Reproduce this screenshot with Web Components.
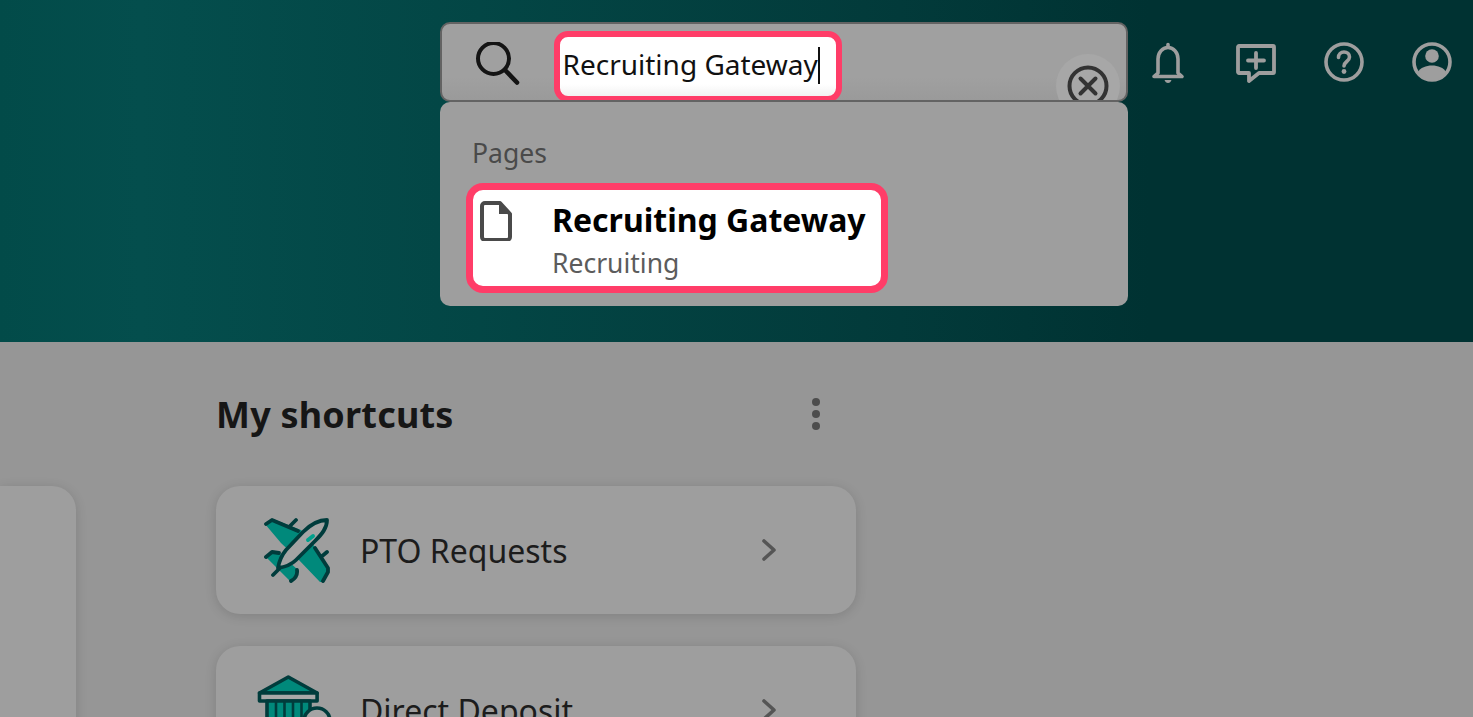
<!DOCTYPE html>
<html><head><meta charset="utf-8"><style>
html,body{margin:0;height:717px;overflow:hidden;background:#969696;font-family:"Noto Sans",sans-serif}
</style></head><body>
<app-page>
  <app-header slot="header">
    <search-box slot="search" value="Recruiting Gateway">
      <search-result title="Recruiting Gateway" sub="Recruiting"></search-result>
    </search-box>
    <icon-button slot="actions" name="bell" label="Notifications"></icon-button>
    <icon-button slot="actions" name="feedback" label="Feedback"></icon-button>
    <icon-button slot="actions" name="help" label="Help"></icon-button>
    <icon-button slot="actions" name="user" label="Profile"></icon-button>
  </app-header>
  <side-card slot="side"></side-card>
  <shortcut-list slot="main" heading="My shortcuts">
    <shortcut-card label="PTO Requests" icon="plane"></shortcut-card>
    <shortcut-card label="Direct Deposit" icon="bank"></shortcut-card>
  </shortcut-list>
</app-page>
<script>
function def(name, html){
  customElements.define(name, class extends HTMLElement{
    connectedCallback(){
      if(this.shadowRoot) return;
      const r=this.attachShadow({mode:'open'});
      r.innerHTML=typeof html==='function'?html(this):html;
    }
  });
}
def('app-page',`<style>
:host{display:block;height:717px;overflow:hidden}
.grid{display:grid;grid-template-columns:76px 640px;column-gap:140px;align-items:start}
</style>
<slot name="header"></slot>
<div class="grid"><slot name="side"></slot><slot name="main"></slot></div>`);
def('app-header',`<style>
:host{display:grid;grid-template-columns:688px auto;column-gap:16px;align-items:start;height:342px;box-sizing:border-box;padding:22px 0 0 440px;
background:linear-gradient(90deg,#024b49 0,#044e4d 140px,#034645 480px,#023a3a 900px,#003232 1150px,#003232 100%)}
.acts{display:flex;gap:40px;padding-top:16px}
</style><slot name="search"></slot><div class="acts"><slot name="actions"></slot></div>`);
const c='#9e9e9e';
const icons={
bell:`<path d="M24 6.500v3M14 35V21c0-6.500 4.400-11.500 10-11.500S34 14.500 34 21v14l4 3.500H10z" fill="none" stroke="${c}" stroke-width="3.600" stroke-linejoin="round" stroke-linecap="round"/><path d="M20.500 42h7q-1 3-3.500 3t-3.500-3z" fill="${c}"/>`,
feedback:`<path d="M7 8h34a1 1 0 0 1 1 1v25a1 1 0 0 1-1 1H27l-10 8v-8H7a1 1 0 0 1-1-1V9a1 1 0 0 1 1-1z" fill="none" stroke="${c}" stroke-width="3.800" stroke-linejoin="round"/><path d="M24 15v15M16 22.500h16" fill="none" stroke="${c}" stroke-width="3.800" stroke-linecap="round"/>`,
help:`<circle cx="24" cy="24" r="18" fill="none" stroke="${c}" stroke-width="3.600"/><path d="M18.500 19.500c0-3.400 2.400-5.500 5.500-5.500s5.500 2.100 5.500 5c0 4.500-5.500 4.500-5.500 9" fill="none" stroke="${c}" stroke-width="3.600" stroke-linecap="round"/><circle cx="24" cy="33.500" r="2.400" fill="${c}"/>`,
user:`<circle cx="24" cy="24" r="18" fill="none" stroke="${c}" stroke-width="3.600"/><circle cx="24" cy="18" r="6.800" fill="${c}"/><path d="M9.500 34.500c3-5 8.500-7 14.500-7s11.500 2 14.500 7c-3.500 5-8.500 8-14.500 8s-11-3-14.500-8z" fill="${c}"/>`
};
def('icon-button',h=>`<style>:host{display:block;width:48px;height:48px}svg{display:block}</style>
<svg width="48" height="48" viewBox="0 0 48 48" role="img" aria-label="${h.getAttribute('label')}">${icons[h.getAttribute('name')]}</svg>`);
def('search-box',h=>`<style>
:host{display:block;position:relative;width:688px;height:80px}
.box{box-sizing:border-box;height:80px;background:linear-gradient(#a0a0a0 0,#a0a0a0 70%,#9a9a9a 100%);border:2px solid #636363;border-radius:10px;display:flex;align-items:flex-start;overflow:hidden;position:relative}
.mag{margin:18px 0 0 33px;width:46px;height:46px;flex:none;display:block}
.field{box-sizing:border-box;margin:7px 0 0 33px;width:288px;height:71px;flex:none;border:6.500px solid #ff3d68;border-radius:14px;background:linear-gradient(#fff 80%,#f2f2f2);
 padding:0 0 0 2.500px;font-size:28px;color:#111;display:flex;align-items:center;white-space:nowrap;position:relative;z-index:1}
.txt{position:relative;top:-3px}
.caret{display:inline-block;width:2px;height:37px;background:#111;flex:none;position:relative;top:-1px}
.hover{position:absolute;left:614px;top:30px;width:64px;height:64px;border-radius:50%;background:#a7a7a7;display:flex;align-items:center;justify-content:center}
.drop{position:absolute;left:0;top:80px;width:688px;height:204px;box-sizing:border-box;background:#9e9e9e;border-radius:10px;padding:33px 0 0 26px}
.lbl{font-size:26.500px;line-height:36px;color:#4a4a4a;padding-left:6px}
.res{margin-top:12px}
</style>
<div class="box">
<svg class="mag" viewBox="0 0 46 46" aria-hidden="true"><circle cx="18.500" cy="16.500" r="15.500" fill="none" stroke="#141414" stroke-width="4"/><path d="M30 28l12 12.500" stroke="#141414" stroke-width="4.600" stroke-linecap="round"/></svg>
<div class="field"><span class="txt">${h.getAttribute('value')}</span><i class="caret"></i></div>
<div class="hover"><svg width="44" height="44" viewBox="0 0 44 44" aria-hidden="true"><circle cx="22" cy="22" r="18.500" fill="none" stroke="#333" stroke-width="4"/><path d="M14.500 14.500l15 15M29.500 14.500l-15 15" stroke="#333" stroke-width="4" stroke-linecap="round"/></svg></div>
</div>
<div class="drop"><div class="lbl">Pages</div><div class="res"><slot></slot></div></div>`);
def('search-result',h=>`<style>
:host{display:block;box-sizing:border-box;width:422px;height:110px;background:#fff;border:7px solid #ff3d68;border-radius:17px;position:relative}
.row{display:flex;padding:9px 0 0 7px}
svg{display:block;flex:none;width:32px;height:40px;margin-right:40px;margin-top:2px}
.t{font-size:32px;font-weight:700;color:#000;line-height:42px;white-space:nowrap}
.s{font-size:26.500px;color:#5c5c5c;line-height:38px;margin-top:3px}
</style><div class="row">
<svg viewBox="0 0 32 40" aria-hidden="true"><path d="M2 5a3 3 0 0 1 3-3h15l10 11v23a3 3 0 0 1-3 3H5a3 3 0 0 1-3-3z" fill="#fff" stroke="#4a4a4a" stroke-width="4" stroke-linejoin="round"/><path d="M19 2l11 11H19z" fill="#4a4a4a"/></svg>
<div><div class="t">${h.getAttribute('title')}</div><div class="s">${h.getAttribute('sub')}</div></div></div>`);
def('side-card',`<style>:host{display:block;height:400px;margin-top:144px;background:#9e9e9e;border-radius:0 24px 0 0;box-shadow:0 2px 12px rgba(0,0,0,.14)}</style>`);
def('shortcut-list',h=>`<style>
:host{display:block}
.head{display:flex;align-items:center;justify-content:space-between;height:144px;box-sizing:border-box;padding:0 36px 0 0}
h2{margin:0;font-family:"Noto Sans",sans-serif;font-weight:700;font-size:36px;letter-spacing:.2px;color:#161616}
.keb{display:flex;flex-direction:column;gap:4px}
.keb i{display:block;width:8px;height:8px;border-radius:50%;background:#4d4d4d}
.list{display:flex;flex-direction:column;gap:32px}
</style>
<div class="head"><h2>${h.getAttribute('heading')}</h2><div class="keb"><i></i><i></i><i></i></div></div>
<div class="list"><slot></slot></div>`);
const D='#003c3c',T='#00897b';
const art={
plane:`<svg width="68" height="68" viewBox="0 0 68 68" aria-hidden="true"><g stroke-linejoin="round" stroke-linecap="round">
<path d="M1 7L9 2l28 11 14 17 13 21v5l-5 9-3 0-22-23-17-16zM2 40l6-5 7 1 18 16-1 9-5 4-13-13z" fill="${T}"/>
<g fill="none" stroke="${D}" stroke-width="3.800"><path d="M2 7L8 3l26 11M51 31l13 20v4l-5 9M2 40l6-5 7 1M33 53q1 7-6 11M9 58l6-6M26 9l6-6M57 40l6-5"/>
<path d="M63 3c-8 0-17 5-24 12L22 33c-5 6-7 12-8 18 7-1 13-3 18-8l19-19c7-7 12-13 12-21z" fill="#a4a4a4"/></g></g>
<path d="M44 23l5-4" stroke="#00a08c" stroke-width="4" stroke-linecap="round"/></svg>`,
bank:`<svg width="68" height="68" viewBox="0 0 68 68" style="overflow:visible" aria-hidden="true"><g stroke="${D}" stroke-width="3.600" stroke-linejoin="round">
<path d="M24.300 0L-4.500 16h57.600z" fill="${T}"/><rect x="-4.500" y="16" width="57.600" height="8" fill="#a8a8a8"/>
<path d="M3 24h43v40H3z" fill="${T}"/></g><path d="M12 24v40M20.500 24v40M29 24v40M37.500 24v40" fill="none" stroke="${D}" stroke-width="2.600"/>
<circle cx="53" cy="44" r="13" fill="#a4a4a4" stroke="${D}" stroke-width="3.600"/></svg>`
};
def('shortcut-card',h=>`<style>
:host{display:flex;align-items:center;box-sizing:border-box;height:128px;background:#9e9e9e;border-radius:24px;box-shadow:0 2px 12px rgba(0,0,0,.14);padding:0 79px 0 48px}
.ic{width:68px;height:68px;flex:none;margin-right:28px;margin-top:2px}
.l{flex:1;font-size:32px;color:#1c1c1c;white-space:nowrap}
svg{display:block}
</style><div class="ic">${art[h.getAttribute('icon')]}</div><div class="l">${h.getAttribute('label')}</div>
<svg width="16" height="24" viewBox="0 0 16 24" aria-hidden="true"><path d="M3 3l10 9-10 9" fill="none" stroke="#555" stroke-width="3.600" stroke-linecap="round" stroke-linejoin="round"/></svg>`);
</script>
</body></html>
